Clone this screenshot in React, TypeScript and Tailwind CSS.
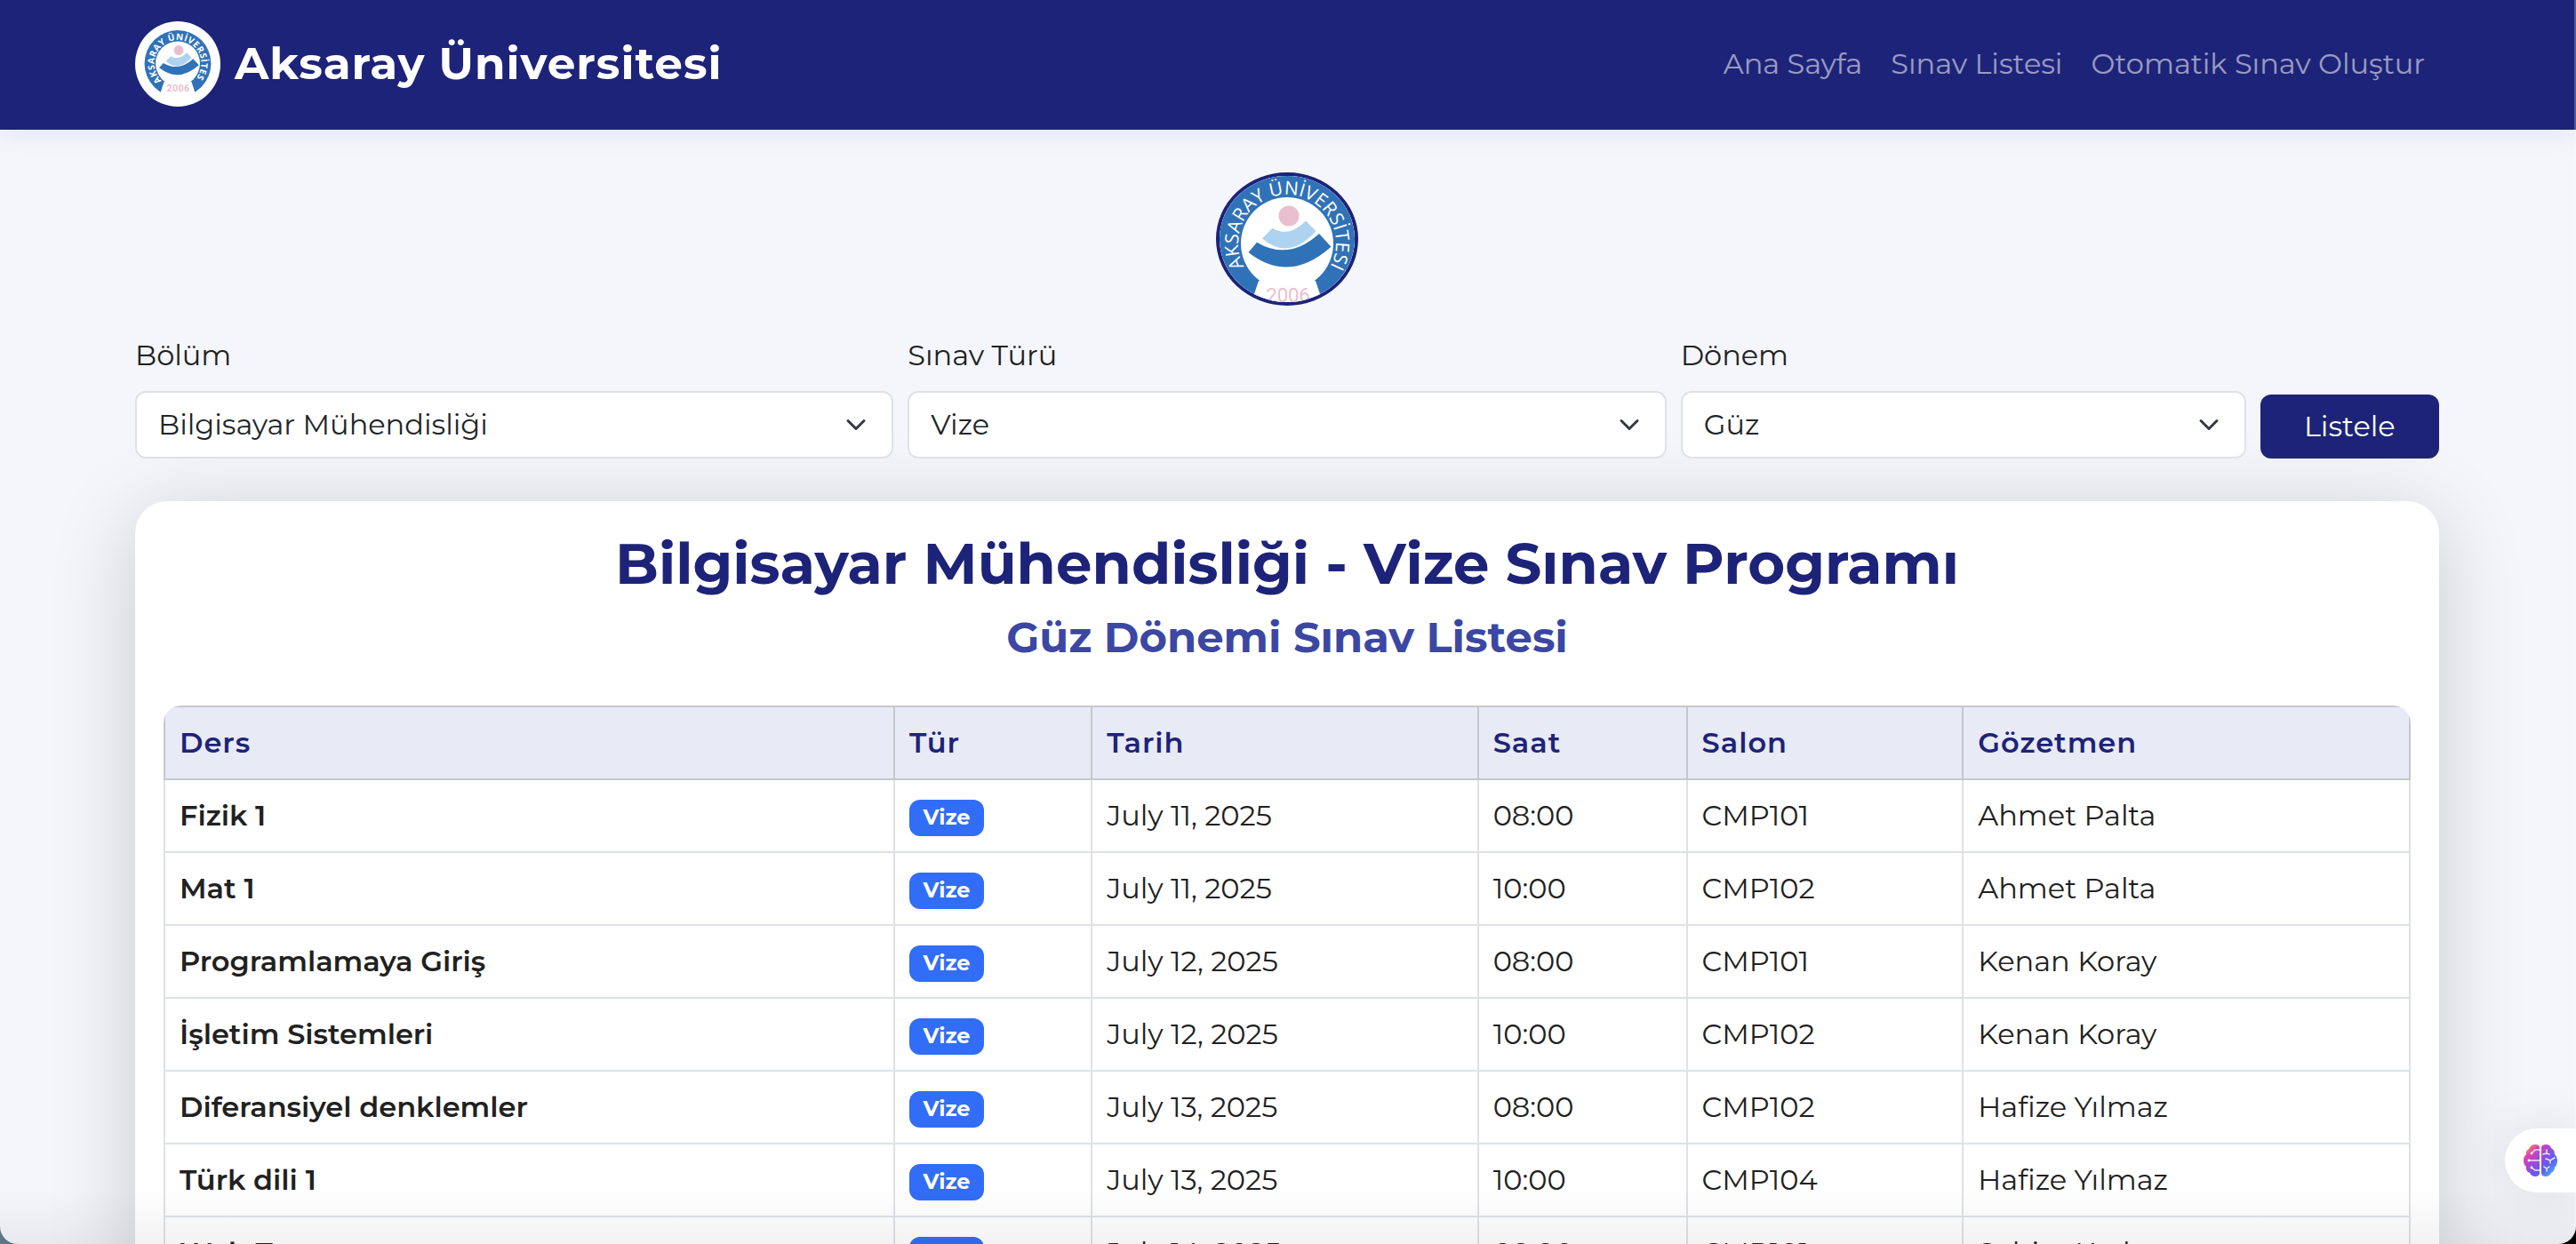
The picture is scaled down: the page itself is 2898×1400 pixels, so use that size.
import { useId } from "react";

const departments = ["Bilgisayar Mühendisliği"];
const examTypes = ["Vize", "Final"];
const terms = ["Güz", "Bahar"];

const exams = [
  ["Fizik 1", "July 11, 2025", "08:00", "CMP101", "Ahmet Palta"],
  ["Mat 1", "July 11, 2025", "10:00", "CMP102", "Ahmet Palta"],
  ["Programlamaya Giriş", "July 12, 2025", "08:00", "CMP101", "Kenan Koray"],
  ["İşletim Sistemleri", "July 12, 2025", "10:00", "CMP102", "Kenan Koray"],
  ["Diferansiyel denklemler", "July 13, 2025", "08:00", "CMP102", "Hafize Yılmaz"],
  ["Türk dili 1", "July 13, 2025", "10:00", "CMP104", "Hafize Yılmaz"],
  ["Web Tasarım", "July 14, 2025", "08:00", "CMP101", "Sabire Karlı"],
];

function Emblem({ viewBox, className }: { viewBox: string; className: string }) {
  const arc = useId();
  return (
    <svg viewBox={viewBox} preserveAspectRatio="none" className={className} role="img" aria-label="Aksaray Üniversitesi">
      <defs>
        <path id={arc} d="M47.9 129.4 A55 55 0 1 1 132.1 129.4" />
      </defs>
      <rect x="-40" y="-40" width="260" height="260" fill="#fff" />
      <circle cx="90" cy="94" r="78" fill="#3072b8" />
      <circle cx="90" cy="94" r="52" fill="#fff" />
      <path d="M58 136 L53 151 L44 180 H136 L127 151 L122 136 Z" fill="#fff" />
      <circle cx="92" cy="63" r="11.5" fill="#e9bfd0" />
      <path d="M62 88.5 L73.5 76.7 Q92 88 111 68.5 L122.5 80 Q92 114 62 88.5 Z" fill="#add3f0" />
      <path d="M46.5 104 L56 92.7 Q92 114 126 83 L139.5 97.7 Q92 140 46.5 104 Z" fill="#3072b8" />
      <text fill="#fff" fontSize="21" fontFamily="'Open Sans', sans-serif">
        <textPath href={`#${arc}`} startOffset="50%" textAnchor="middle">AKSARAY ÜNİVERSİTESİ</textPath>
      </text>
      <text x="91" y="160" textAnchor="middle" fill="#e9bfd0" fontSize="22" fontFamily="Roboto, sans-serif">2006</text>
    </svg>
  );
}

function Field({ label, options, className }: { label: string; options: string[]; className: string }) {
  const id = useId();
  return (
    <div className={className}>
      <label htmlFor={id} className="mb-4 block leading-12">{label}</label>
      <div className="relative">
        <select id={id} className="block h-19 w-full appearance-none rounded-xl border-2 border-[#dee2e6] bg-white pr-18 pl-6 text-[#212529]">
          {options.map((o) => <option key={o}>{o}</option>)}
        </select>
        <svg viewBox="0 0 16 16" className="pointer-events-none absolute top-[26px] right-[30px] h-6 w-6" fill="none" stroke="#343a40" strokeWidth="2" strokeLinecap="round" strokeLinejoin="round">
          <path d="m2 5 6 6 6-6" />
        </svg>
      </div>
    </div>
  );
}

function BrainIcon() {
  const g = useId();
  return (
    <svg viewBox="0 0 40 38" className="h-[38px] w-10" aria-hidden="true">
      <defs>
        <linearGradient id={g} x1="4" y1="2" x2="36" y2="36" gradientUnits="userSpaceOnUse">
          <stop offset="0" stopColor="#f5a62c" />
          <stop offset=".22" stopColor="#dc3fb8" />
          <stop offset=".5" stopColor="#8a50e0" />
          <stop offset=".72" stopColor="#5b60ee" />
          <stop offset="1" stopColor="#48bdfb" />
        </linearGradient>
      </defs>
      <path fill={`url(#${g})`} d="M19 4 Q18 1 14 1 Q9 1 7 6 Q3 8 4 12 Q1 14 1 19 Q1 24 4 26 Q3 31 8 33 Q10 37 14 37 Q18 37 19 34 Z M21 4 Q22 1 26 1 Q31 1 32 5 Q36 7 36 12 Q39 15 39 19 Q39 24 36 27 Q36 31 32 33 Q30 37 26 37 Q22 37 21 34 Z" />
      <g stroke="#fff" strokeOpacity=".85" strokeWidth="1.5" fill="none" strokeLinecap="round">
        <path d="M19 7h-5l-4 4M19 19H7M19 30h-5l-4-3M27 7v4l-4 1m4-1 3 1M26 17l5 2 5-3m-5 3v3M24 26l3 2 3-2m-3 2v3" />
      </g>
      <g fill="#fff"><circle cx="10" cy="11" r="1.4" /><circle cx="7" cy="19" r="1.4" /><circle cx="10" cy="27" r="1.4" /></g>
    </svg>
  );
}

const th = "border-2 border-[#c6c7cc] px-4 text-left font-semibold tracking-[1px]";
const td = "border-2 border-[#dee2e6] px-4";

export default function App() {
  return (
    <div className="h-screen bg-linear-to-r from-[#5d7785] to-black font-[Montserrat,Inter,sans-serif] text-[32px] leading-12 text-[#212121]">
      <div className="relative h-full overflow-hidden rounded-b-[20px] bg-[#f4f6fb]">
        <header className="bg-[#1d2378] pt-6 pr-[154px] pb-[26px] pl-38 shadow-[0_4px_32px_rgba(26,35,126,0.08)]">
          <div className="flex h-24 items-center justify-between">
            <a href="#" className="flex items-center gap-4 text-[50px] font-bold tracking-[1px] text-white">
              <Emblem viewBox="-10 -5 200 200" className="h-24 w-24 rounded-full" />
              <span>Aksaray Üniversitesi</span>
            </a>
            <nav className="flex gap-8 pr-4 text-white/55">
              <a href="#">Ana Sayfa</a>
              <a href="#">Sınav Listesi</a>
              <a href="#">Otomatik Sınav Oluştur</a>
            </nav>
          </div>
        </header>
        <main className="pt-12 pr-[154px] pl-38">
          <div className="flex justify-center">
            <div className="h-[150px] w-40 overflow-hidden rounded-[50%] border-4 border-[#1d2378]">
              <Emblem viewBox="14 18 152 142" className="h-full w-full" />
            </div>
          </div>
          <form className="mt-8 grid grid-cols-12 items-end gap-4" onSubmit={(e) => e.preventDefault()}>
            <Field label="Bölüm" options={departments} className="col-span-4" />
            <Field label="Sınav Türü" options={examTypes} className="col-span-4" />
            <Field label="Dönem" options={terms} className="col-span-3" />
            <button type="submit" className="h-18 rounded-xl bg-[#1d2378] text-white">Listele</button>
          </form>
          <section className="mt-12 rounded-[36px] bg-white px-8 pt-8 shadow-[0_16px_96px_rgba(0,0,0,0.175)]">
            <h1 className="text-center text-[64px] leading-[76px] font-bold text-[#1d2378]">Bilgisayar Mühendisliği - Vize Sınav Programı</h1>
            <h2 className="mt-4 text-center text-5xl leading-[58px] font-bold text-[#3b47a3]">Güz Dönemi Sınav Listesi</h2>
            <div className="mt-12 overflow-hidden rounded-[20px]">
              <table className="w-full table-fixed border-collapse">
                <colgroup>
                  <col className="w-[32.5%]" />
                  <col className="w-[8.8%]" />
                  <col className="w-[17.2%]" />
                  <col className="w-[9.3%]" />
                  <col className="w-[12.3%]" />
                  <col />
                </colgroup>
                <thead className="bg-[#e8eaf6] text-[#1d2378]">
                  <tr className="h-[82px]">
                    {["Ders", "Tür", "Tarih", "Saat", "Salon", "Gözetmen"].map((h) => <th key={h} scope="col" className={th}>{h}</th>)}
                  </tr>
                </thead>
                <tbody>
                  {exams.map(([course, date, time, room, proctor]) => (
                    <tr key={course} className="h-[82px]">
                      <td className={`${td} font-semibold`}>{course}</td>
                      <td className={td}>
                        <span className="mt-1 flex h-[41px] w-[84px] items-center justify-center rounded-xl bg-[#316df6] text-2xl font-bold text-white">Vize</span>
                      </td>
                      <td className={td}>{date}</td>
                      <td className={td}>{time}</td>
                      <td className={td}>{room}</td>
                      <td className={td}>{proctor}</td>
                    </tr>
                  ))}
                </tbody>
              </table>
            </div>
          </section>
        </main>
        <div className="pointer-events-none absolute inset-x-0 bottom-0 h-16 bg-linear-to-b from-transparent to-black/5" />
        <button type="button" aria-label="Asistan" className="absolute right-0 bottom-[58px] flex h-18 w-20 items-center rounded-l-full bg-white pl-5 shadow-[0_4px_64px_rgba(0,0,0,0.12)]">
          <BrainIcon />
        </button>
        <div className="pointer-events-none absolute inset-y-0 right-0 w-0.5 bg-white/25" />
      </div>
    </div>
  );
}
